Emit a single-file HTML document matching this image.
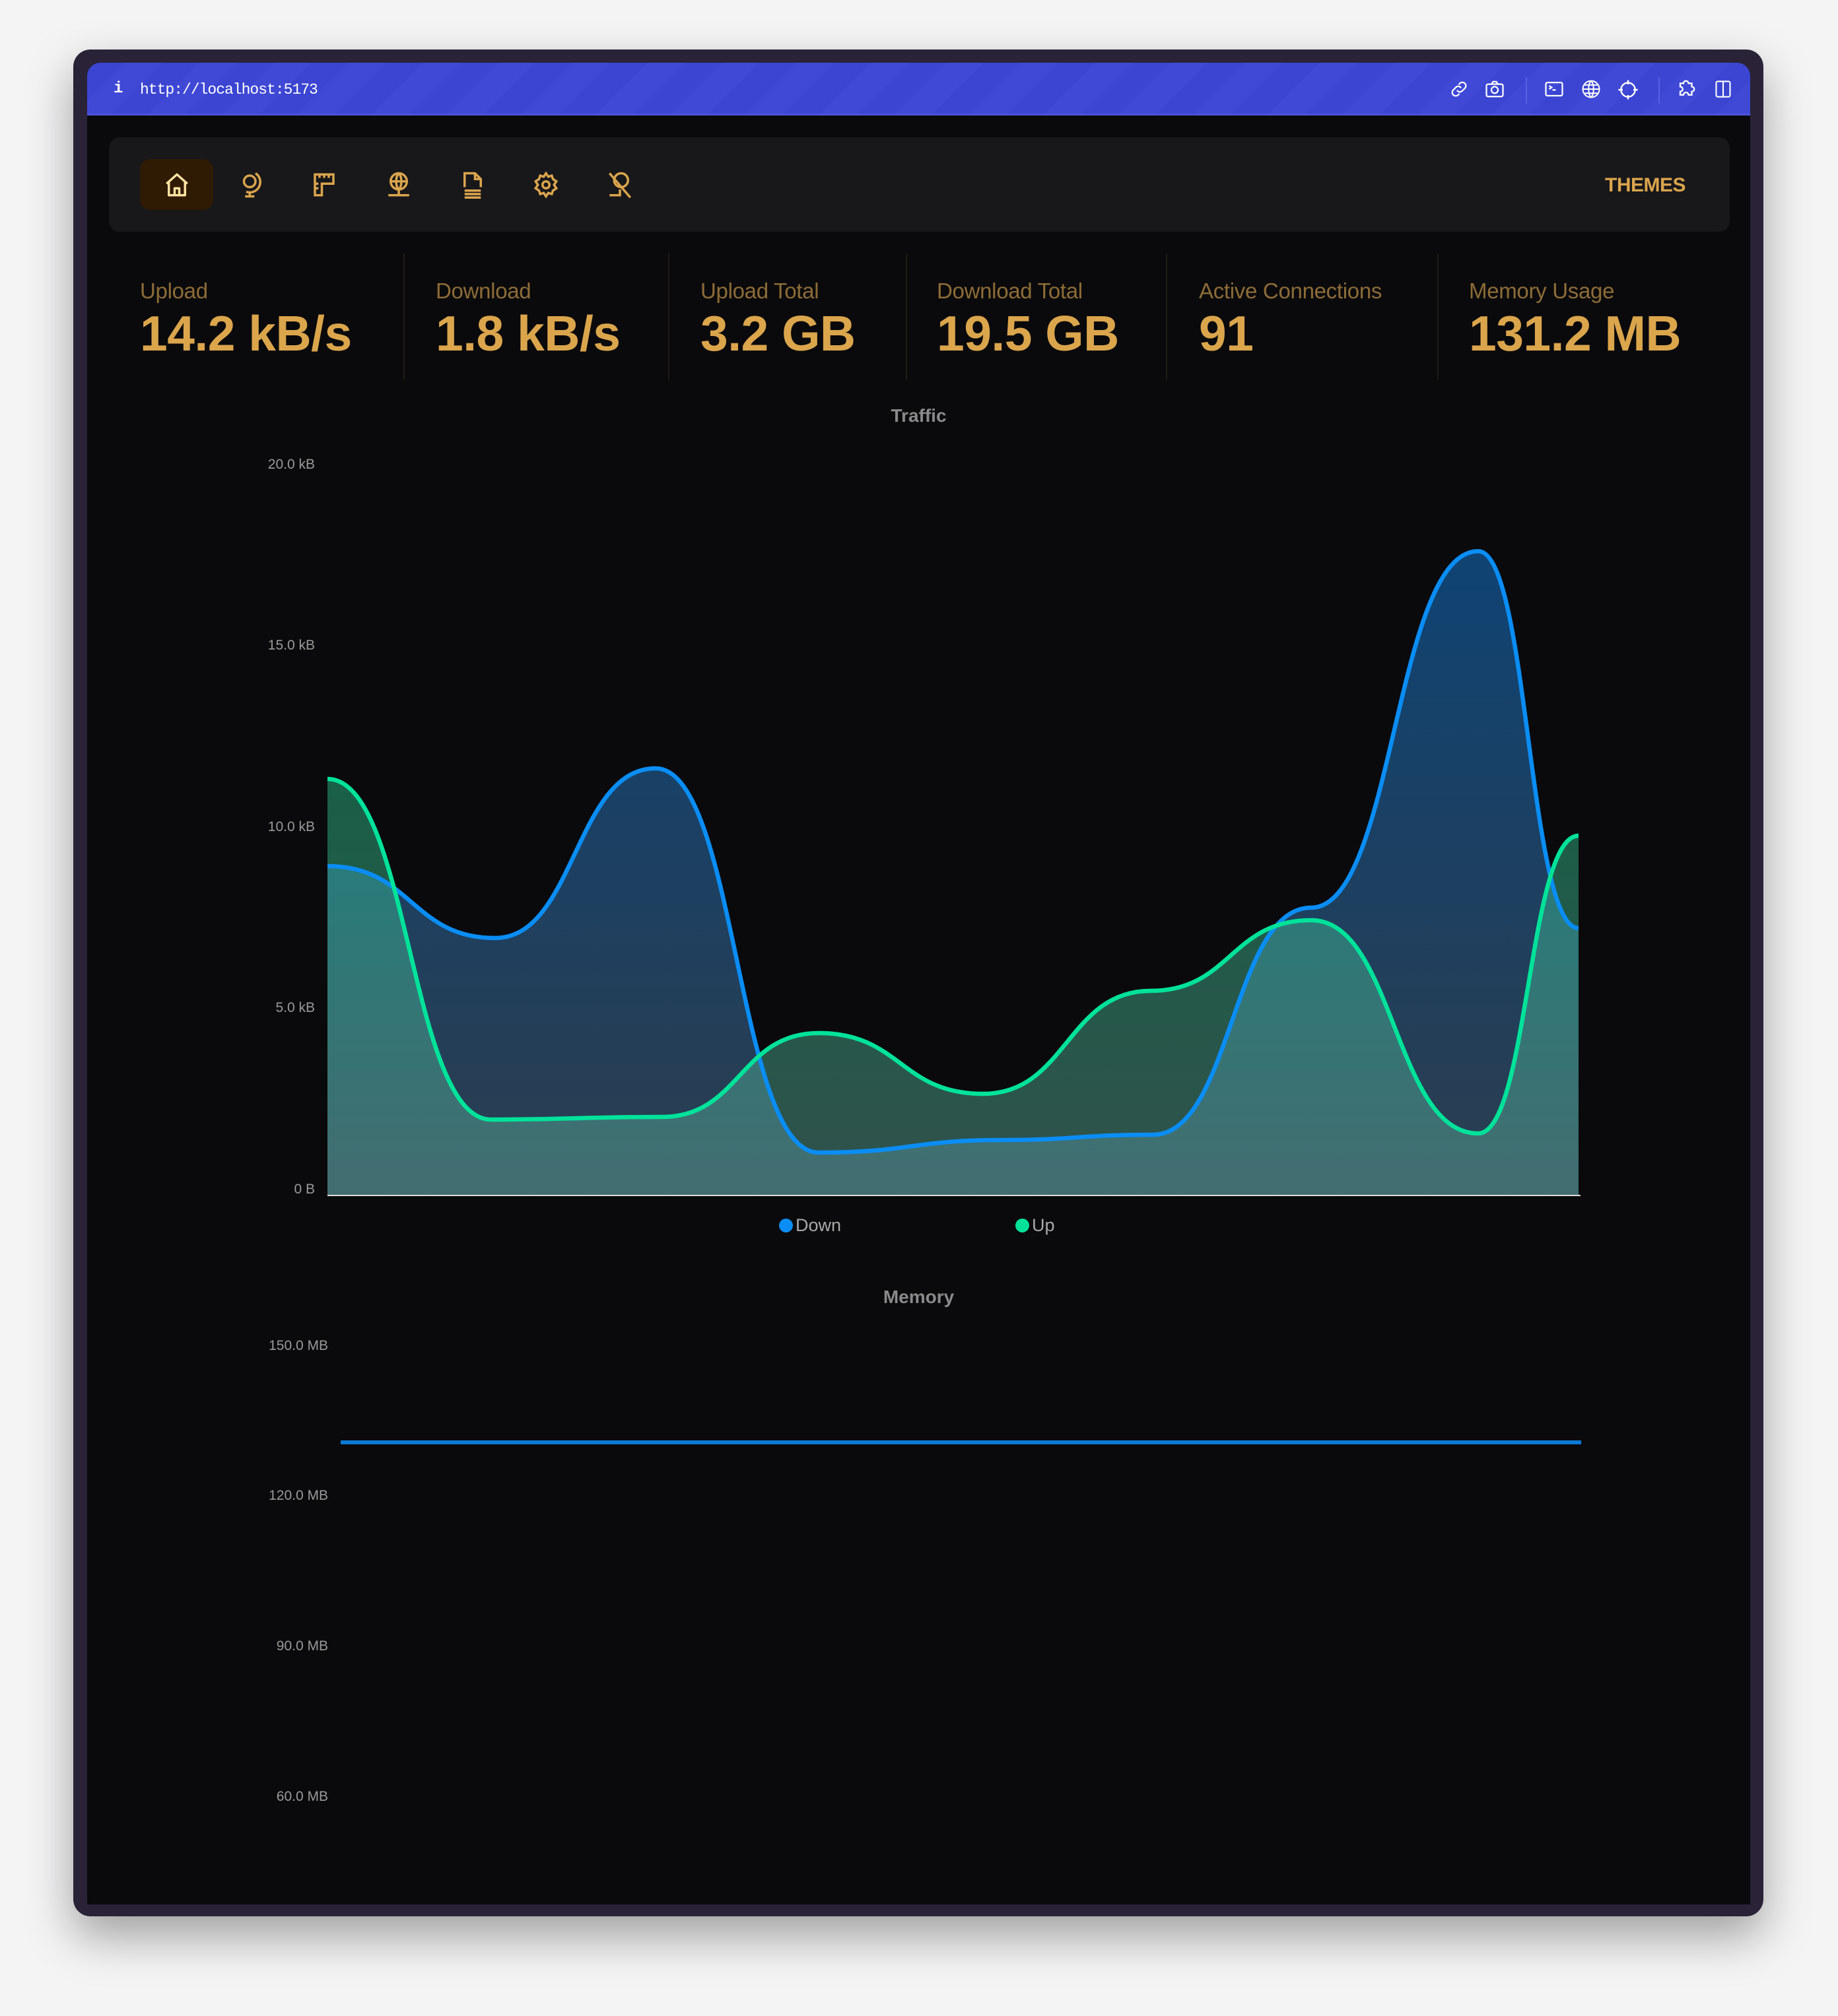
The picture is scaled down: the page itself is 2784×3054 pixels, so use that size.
<!DOCTYPE html>
<html><head><meta charset="utf-8"><style>
*{margin:0;padding:0;box-sizing:border-box}
body{width:2784px;height:3054px;background:#f4f4f5;position:relative;overflow:hidden;font-family:"Liberation Sans",sans-serif}
.frame{position:absolute;left:111px;top:75px;width:2560px;height:2828px;background:#2a2337;border-radius:26px;box-shadow:0 30px 70px rgba(0,0,0,.35)}
.screen{position:absolute;left:132px;top:95px;width:2519px;height:2790px;background:#0a0a0c;border-radius:20px 20px 0 0;overflow:hidden}
.bar{position:absolute;left:0;top:0;width:100%;height:80px;background:repeating-linear-gradient(135deg,#3b45d2 0 40px,#4049d6 40px 80px);border-bottom:3px solid #4a53dc}
.bar .i{position:absolute;left:40px;top:26px;color:#fff;font:bold 24px "Liberation Mono",monospace}
.bar .url{position:absolute;left:80px;top:28px;color:#fff;font:23px "Liberation Mono",monospace;letter-spacing:-1px}
.bar svg{position:absolute;top:25px}
.sep{position:absolute;top:22px;width:2px;height:40px;background:#5860e0}
.nav{position:absolute;left:33px;top:113px;width:2455px;height:143px;background:#18181b;border-radius:16px}
.home{position:absolute;left:47px;top:33px;width:111px;height:77px;background:#2f1a03;border-radius:16px}
.nav svg{position:absolute;top:50px}
.themes{position:absolute;left:2266px;top:56px;color:#dba54c;font:bold 30px "Liberation Sans",sans-serif;letter-spacing:-.5px}
.stat{position:absolute;top:327px}
.stat .l{color:#8d6c37;font-size:33px;letter-spacing:-.3px}
.stat .v{color:#dba54c;font-size:75px;font-weight:bold;letter-spacing:-0.5px;margin-top:2px}
.vs{position:absolute;top:289px;width:2px;height:191px;background:#1e1c17}
.ttl{position:absolute;width:2519px;left:0;text-align:center;color:#8a8a8a;font-weight:bold;font-size:28px}
.yl{position:absolute;text-align:right;color:#9a9a9a;font-size:21px;width:200px}
.leg{position:absolute;top:1841px;color:#a9a9a9;font-size:27px}
.leg i{display:inline-block;width:21px;height:21px;border-radius:50%;vertical-align:-2px;margin-right:4px}
</style></head><body>
<div class="frame"></div>
<div class="screen">
 <div class="bar">
  <div class="i">i</div><div class="url">http://localhost:5173</div>
  <svg style="left:2063px" width="30" height="30" viewBox="0 0 24 24" fill="none" stroke="#fff" stroke-width="1.8" stroke-linecap="round"><path d="M10 14a4 4 0 0 0 6 0l3-3a4 4 0 0 0-6-6l-1 1"/><path d="M14 10a4 4 0 0 0-6 0l-3 3a4 4 0 0 0 6 6l1-1"/></svg>
  <svg style="left:2116px" width="32" height="30" viewBox="0 0 24 24" fill="none" stroke="#fff" stroke-width="1.8"><rect x="2" y="6" width="20" height="15" rx="2"/><path d="M8 6l2-3h4l2 3"/><circle cx="12" cy="13" r="4"/></svg>
  <div class="sep" style="left:2179px"></div>
  <svg style="left:2206px" width="32" height="30" viewBox="0 0 24 24" fill="none" stroke="#fff" stroke-width="1.8"><rect x="2" y="4" width="20" height="16" rx="2"/><path d="M6 8l3 2-3 2M10 13h4"/></svg>
  <svg style="left:2263px" width="30" height="30" viewBox="0 0 24 24" fill="none" stroke="#fff" stroke-width="1.6"><circle cx="12" cy="12" r="10"/><path d="M2 12h20M12 2c-4 4-4 16 0 20M12 2c4 4 4 16 0 20M4 7h16M4 17h16"/></svg>
  <svg style="left:2318px" width="32" height="32" viewBox="0 0 24 24" fill="none" stroke="#fff" stroke-width="1.8"><circle cx="12" cy="12" r="8"/><path d="M12 1v5M12 18v5M1 12h5M18 12h5"/></svg>
  <div class="sep" style="left:2380px"></div>
  <svg style="left:2406px" width="34" height="30" viewBox="0 0 24 24" fill="none" stroke="#fff" stroke-width="1.8"><path d="M8 5a3 3 0 0 1 6 0h4v4a3 3 0 0 1 0 6v4h-4a3 3 0 0 0-6 0H4v-4a3 3 0 0 0 0-6V5z"/></svg>
  <svg style="left:2464px" width="28" height="30" viewBox="0 0 24 24" fill="none" stroke="#fff" stroke-width="1.8"><rect x="3" y="2" width="18" height="20" rx="2"/><path d="M12 2v20"/></svg>
 </div>
 <div class="nav">
  <div class="home"></div>
  <svg style="left:82px" width="42" height="44" viewBox="0 0 24 24" fill="none" stroke="#fde2a2" stroke-width="2" stroke-linejoin="round"><path d="M3 11l9-8 9 8M5 9v12h14V9"/><path d="M10 21v-6h4v6"/></svg>
  <svg style="left:194px" width="42" height="44" viewBox="0 0 24 24" fill="none" stroke="#dba54c" stroke-width="2"><circle cx="11" cy="9" r="5"/><path d="M16 2a9 9 0 0 1-8 16M11 18v4M7 22h8"/></svg>
  <svg style="left:305px" width="42" height="44" viewBox="0 0 24 24" fill="none" stroke="#dba54c" stroke-width="2"><path d="M4 3h16v8H10v10H4z"/><path d="M8 3v3M12 3v3M16 3v3M4 11h3M4 15h3"/></svg>
  <svg style="left:418px" width="42" height="44" viewBox="0 0 24 24" fill="none" stroke="#dba54c" stroke-width="2"><circle cx="12" cy="9" r="7"/><path d="M5 9h14M12 2c-3 3-3 11 0 14M12 2c3 3 3 11 0 14M12 16v6M3 21h18"/></svg>
  <svg style="left:530px" width="42" height="44" viewBox="0 0 24 24" fill="none" stroke="#dba54c" stroke-width="2"><path d="M5 14V2h9l5 5v7M14 2v5h5M5 17h14M5 20h14M5 23h14"/></svg>
  <svg style="left:641px" width="42" height="44" viewBox="0 0 24 24" fill="none" stroke="#dba54c" stroke-width="2"><circle cx="12" cy="12" r="3"/><path d="M12 2l2 3 3-1 1 3 3 2-2 3 2 3-3 2-1 3-3-1-2 3-2-3-3 1-1-3-3-2 2-3-2-3 3-2 1-3 3 1z"/></svg>
  <svg style="left:753px" width="42" height="44" viewBox="0 0 24 24" fill="none" stroke="#dba54c" stroke-width="2"><circle cx="13" cy="8" r="6"/><path d="M3 2l18 21M12 16v5M3 21h10"/></svg>
  <div class="themes">THEMES</div>
 </div>
 <div class="stat" style="left:80px"><div class="l">Upload</div><div class="v">14.2 kB/s</div></div>
 <div class="vs" style="left:479px"></div>
 <div class="stat" style="left:528px"><div class="l">Download</div><div class="v">1.8 kB/s</div></div>
 <div class="vs" style="left:880px"></div>
 <div class="stat" style="left:929px"><div class="l">Upload Total</div><div class="v">3.2 GB</div></div>
 <div class="vs" style="left:1240px"></div>
 <div class="stat" style="left:1287px"><div class="l">Download Total</div><div class="v">19.5 GB</div></div>
 <div class="vs" style="left:1634px"></div>
 <div class="stat" style="left:1684px"><div class="l">Active Connections</div><div class="v">91</div></div>
 <div class="vs" style="left:2045px"></div>
 <div class="stat" style="left:2093px"><div class="l">Memory Usage</div><div class="v">131.2 MB</div></div>

 <div class="ttl" style="top:519px">Traffic</div>
 <div class="yl" style="left:145px;top:597px">20.0 kB</div>
 <div class="yl" style="left:145px;top:871px">15.0 kB</div>
 <div class="yl" style="left:145px;top:1146px">10.0 kB</div>
 <div class="yl" style="left:145px;top:1420px">5.0 kB</div>
 <div class="yl" style="left:145px;top:1695px">0 B</div>
</div>
<svg style="position:absolute;left:0;top:0" width="2784" height="3054">
 <defs>
  <linearGradient id="gd" x1="0" y1="835" x2="0" y2="1811" gradientUnits="userSpaceOnUse"><stop offset="0" stop-color="#0f4373"/><stop offset="1" stop-color="#2b3d4f"/></linearGradient>
  <linearGradient id="gu" x1="0" y1="1180" x2="0" y2="1811" gradientUnits="userSpaceOnUse"><stop offset="0" stop-color="#2fd59a" stop-opacity=".42"/><stop offset="1" stop-color="#60a89a" stop-opacity=".45"/></linearGradient>
 </defs>
 <path fill="url(#gd)" d="M496,1312 C623,1312 623,1421 750,1421 C871,1421 871,1164 993,1164 C1116,1164 1116,1746 1240,1746 C1380,1746 1380,1727 1519,1727 C1632,1727 1632,1719 1746,1719 C1866,1719 1866,1375 1986,1375 C2112,1375 2112,835 2239,835 C2315,835 2315,1406 2391,1406 L2391,1811 L496,1811Z"/>
 <path fill="url(#gu)" d="M496,1180 C620,1180 620,1696 744,1696 C873,1696 873,1692 1003,1692 C1121,1692 1121,1565 1240,1565 C1364,1565 1364,1657 1489,1657 C1616,1657 1616,1501 1743,1501 C1864,1501 1864,1394 1986,1394 C2112,1394 2112,1717 2239,1717 C2315,1717 2315,1266 2391,1266 L2391,1811 L496,1811Z"/>
 <path fill="none" stroke="#0a8df4" stroke-width="6.5" d="M496,1312 C623,1312 623,1421 750,1421 C871,1421 871,1164 993,1164 C1116,1164 1116,1746 1240,1746 C1380,1746 1380,1727 1519,1727 C1632,1727 1632,1719 1746,1719 C1866,1719 1866,1375 1986,1375 C2112,1375 2112,835 2239,835 C2315,835 2315,1406 2391,1406"/>
 <path fill="none" stroke="#00e29a" stroke-width="6.5" d="M496,1180 C620,1180 620,1696 744,1696 C873,1696 873,1692 1003,1692 C1121,1692 1121,1565 1240,1565 C1364,1565 1364,1657 1489,1657 C1616,1657 1616,1501 1743,1501 C1864,1501 1864,1394 1986,1394 C2112,1394 2112,1717 2239,1717 C2315,1717 2315,1266 2391,1266"/>
 <rect x="496" y="1810" width="1898" height="2" fill="#ddd"/>
 <rect x="516" y="2182" width="1879" height="6" fill="#0b7ad6"/>
</svg>
<div class="leg" style="left:1180px"><i style="background:#0a8df4"></i>Down</div>
<div class="leg" style="left:1538px"><i style="background:#00e29a"></i>Up</div>
<div class="ttl" style="left:132px;top:1949px">Memory</div>
<div class="yl" style="left:297px;top:2027px">150.0 MB</div>
<div class="yl" style="left:297px;top:2254px">120.0 MB</div>
<div class="yl" style="left:297px;top:2482px">90.0 MB</div>
<div class="yl" style="left:297px;top:2710px">60.0 MB</div>
</body></html>
